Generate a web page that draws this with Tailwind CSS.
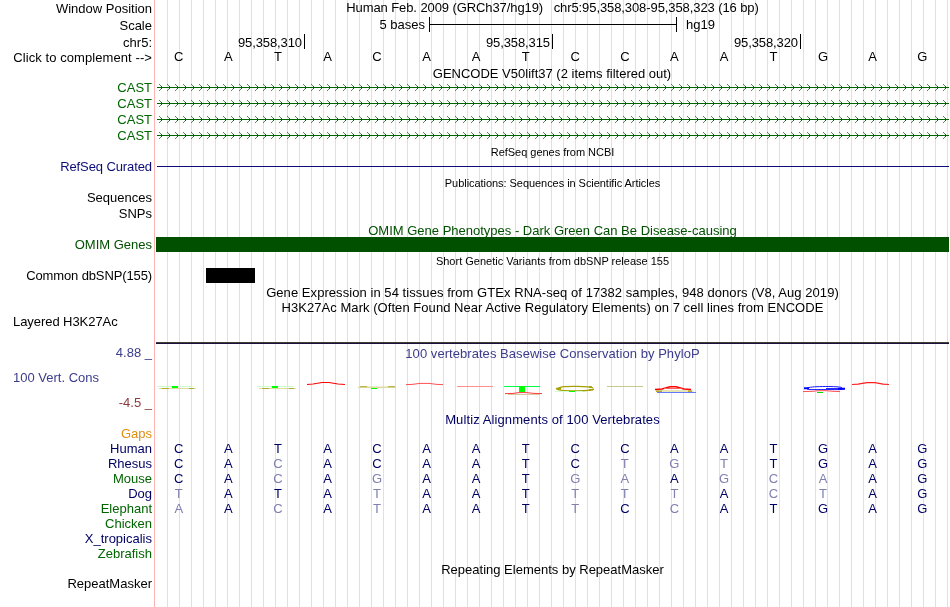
<!DOCTYPE html>
<html lang="en">
<head>
  <meta charset="UTF-8" />
  <meta name="viewport" content="width=device-width, initial-scale=1.0"/>
  <title>Genome Browser - hg19 chr5</title>
  <script src="https://cdn.jsdelivr.net/npm/@tailwindcss/browser@4"></script>
</head>
<body class="bg-white overflow-hidden">
  <div class="flex w-[950px] h-[607px] overflow-hidden will-change-transform antialiased text-[13px] leading-[15px] whitespace-pre text-black font-['Liberation_Sans',Arial,sans-serif]">

    <!-- track labels -->
    <div class="flex flex-col w-[154px] shrink-0 pr-[2px] text-right">
      <div class="mt-px">Window Position</div>
      <div class="mt-[2px]">Scale</div>
      <div class="mt-[2px]">chr5:</div>
      <div class="tracking-[0.08px]">Click to complement --&gt;</div>
      <div class="mt-[15px] text-[#006400]">CAST</div>
      <div class="mt-px text-[#006400]">CAST</div>
      <div class="mt-px text-[#006400]">CAST</div>
      <div class="mt-px text-[#006400]">CAST</div>
      <div class="mt-4 text-[#0c0c78] tracking-[-0.1px]">RefSeq Curated</div>
      <div class="mt-4">Sequences</div>
      <div class="mt-px">SNPs</div>
      <div class="mt-4 text-[#005000]">OMIM Genes</div>
      <div class="mt-4 tracking-[-0.12px]">Common dbSNP(155)</div>
      <div class="mt-[31px] pl-[13px] text-left tracking-[-0.06px]">Layered H3K27Ac</div>
      <div class="mt-4 text-[#3c3c8c]">4.88 _</div>
      <div class="mt-[10px] pl-[13px] text-left text-[#3c3c8c]">100 Vert. Cons</div>
      <div class="mt-[10px] text-[#8c3c3c]">-4.5 _</div>
      <div class="mt-4 text-[#e08c14]">Gaps</div>
      <div class="text-[#000064]">Human</div>
      <div class="text-[#000064]">Rhesus</div>
      <div class="text-[#006400]">Mouse</div>
      <div class="text-[#000064]">Dog</div>
      <div class="text-[#006400]">Elephant</div>
      <div class="text-[#006400]">Chicken</div>
      <div class="text-[#000064]">X_tropicalis</div>
      <div class="text-[#006400]">Zebrafish</div>
      <div class="mt-[15px]">RepeatMasker</div>
    </div>

    <!-- tracks, with a guideline every 12px -->
    <div class="flex flex-col w-[796px] shrink-0 pl-px text-center bg-[repeating-linear-gradient(to_right,transparent_0,transparent_11px,#dcdcff_11px,#dcdcff_12px)] bg-[position:2px_0] shadow-[inset_1px_0_0_#ffb4b4]">
      <div class="h-[15px] tracking-[-0.09px]">Human Feb. 2009 (GRCh37/hg19)   chr5:95,358,308-95,358,323 (16 bp)</div>

      <div class="flex mt-[2px] h-[15px]">
        <div class="w-[270px] text-right">5 bases</div>
        <div class="flex items-center w-[248px] ml-1 border-x border-black"><div class="w-full h-px bg-black"></div></div>
        <div class="ml-[9px]">hg19</div>
      </div>

      <div class="flex mt-[2px] h-[15px] text-right tracking-[-0.1px]">
        <div class="w-[150px] pr-[2px] border-r border-black leading-[17px]">95,358,310</div>
        <div class="w-[248px] pr-[2px] border-r border-black leading-[17px]">95,358,315</div>
        <div class="w-[248px] pr-[2px] border-r border-black leading-[17px]">95,358,320</div>
      </div>

      <div id="bases" class="grid grid-cols-16 -ml-px w-[793px] h-[15px]"></div>
      <div class="mt-[2px] -ml-px h-[15px]">GENCODE V50lift37 (2 items filtered out)</div>

      <svg class="block ml-[2px] w-[792px] h-16 shrink-0" shape-rendering="crispEdges">
        <defs>
          <pattern id="exon" width="8" height="16" patternUnits="userSpaceOnUse">
            <path d="M0 6h8v1h-8z M4 5h1v3h-1z" fill="#006400"/>
            <path d="M3 4h1v1h-1z M3 8h1v1h-1z M2 3h1v1h-1z M2 9h1v1h-1z" fill="#006400" fill-opacity=".7"/>
          </pattern>
        </defs>
        <rect width="792" height="64" fill="url(#exon)"/>
      </svg>

      <div class="h-[15px] text-[11px] tracking-[-0.03px]">RefSeq genes from NCBI</div>
      <div class="mt-[6px] ml-[2px] w-[792px] h-px bg-[#0c0c78]"></div>
      <div class="mt-[9px] h-[15px] text-[11px] tracking-[-0.05px]">Publications: Sequences in Scientific Articles</div>
      <div class="mt-8 h-[15px] text-[#005000]">OMIM Gene Phenotypes - Dark Green Can Be Disease-causing</div>
      <div class="-mt-px ml-px w-[793px] h-[15px] bg-[#005000]"></div>
      <div class="mt-[2px] h-[15px] text-[11px]">Short Genetic Variants from dbSNP release 155</div>
      <div class="-mt-px ml-[51px] w-[49px] h-[15px] bg-black"></div>
      <div class="mt-[2px] h-[15px] tracking-[0.06px]">Gene Expression in 54 tissues from GTEx RNA-seq of 17382 samples, 948 donors (V8, Aug 2019)</div>
      <div class="h-[15px] tracking-[0.05px]">H3K27Ac Mark (Often Found Near Active Regulatory Elements) on 7 cell lines from ENCODE</div>
      <div class="mt-[27px] ml-px w-[793px] h-[2px] border-t border-[#4a3a32] bg-[#14143c]"></div>
      <div class="mt-[2px] h-[15px] text-[#3c3c8c] tracking-[0.05px]">100 vertebrates Basewise Conservation by PhyloP</div>

      <!-- conservation logo -->
      <svg class="block w-[795px] h-[51px] shrink-0" viewBox="155 361 795 51" fill="none">
        <g id="lowT">
          <path d="M157 386.5h36" stroke="#c8ffc8"/>
          <path d="M172 387h6" stroke="#00ff00" stroke-width="2"/>
          <path d="M159 388.5h37" stroke="#dcdca0"/>
          <path d="M162 388.5h7m20 0h5" stroke="#b4aa32"/>
        </g>
        <use href="#lowT" x="100"/>
        <path d="M307 384.5l6-.5 9-1.5h7l9 1.5 7 .5" stroke="#ff0000" stroke-width="1.2"/>
        <path d="M358 387.2h38" stroke="#dcdca0" stroke-width="1.5"/>
        <path d="M360 386.7h7m21 0h7" stroke="#b4aa32"/>
        <path d="M371 388.5h6" stroke="#00ff00"/>
        <path d="M406 384.6l6-.2 8-1h9l8 1 6 .2" stroke="#ff5050"/>
        <path d="M457 386.5h36" stroke="#ff9090"/>
        <path d="M504 386.5h36" stroke="#00ff46"/>
        <path d="M519 386h6v6h-6z" fill="#00ff00"/>
        <path d="M508 394.5h32" stroke="#dcc8a0"/>
        <path d="M505 393.6l8-.2 6-.8h7l8 .8 8 .2" stroke="#ff3c3c"/>
        <path d="M593 388c-2-2-30-2.2-34-.3-4 1.6 0 2.6 5 2.8 9 .4 26 .4 30-1.4" stroke="#a5a000" stroke-width="1.2"/>
        <path d="M556 388.6h5m28-1.5h3m-3 2.6h4" stroke="#a5a000" stroke-width="1.6"/>
        <path d="M555 391.5h28" stroke="#d2ffd2"/>
        <path d="M569 391.5h6" stroke="#00ff00"/>
        <path d="M607 386.5h36" stroke="#c8c88c"/>
        <path d="M656 390h36l2 2h-38z" fill="#e6e6b4"/>
        <path d="M656 391.2h6m26 0h4" stroke="#b4aa32" stroke-width="1.5"/>
        <path d="M655 389.5l7-.6 8-2.1h6l8 2.1 7 .6" stroke="#ff0000" stroke-width="1.5"/>
        <path d="M664 388.5h18" stroke="#ff6060"/>
        <path d="M657 392.5h39" stroke="#6478ff"/>
        <path d="M842 387.6c-3-1.5-30-1.5-34 .2-3 1.2 0 1.8 4 1.8h26c3 0 6-.4 6-1h-18" stroke="#1414ff"/>
        <path d="M804 388.3h5m29 .4h7" stroke="#0000ff" stroke-width="2"/>
        <path d="M803 391.6l10-.3 5-.6h8l7 .6 7 .3" stroke="#ff5050"/>
        <path d="M817 392.5h6" stroke="#00dc00"/>
        <path d="M852 384.5l6-.4 9-1.5h8l8 1.5 6 .4" stroke="#ff1e1e" stroke-width="1.1"/>
      </svg>

      <div class="h-[15px] text-[#000064] tracking-[0.1px]">Multiz Alignments of 100 Vertebrates</div>
      <div id="alignments" class="mt-[14px] -ml-px w-[793px] h-[75px] text-[#000064]"></div>
      <div class="mt-[46px] h-[15px]">Repeating Elements by RepeatMasker</div>
    </div>
  </div>

  <script>
    // lower case = differs from the human base
    const species = [
      'CATACAATCCAATGAG',
      'CAcACAATCtgtTGAG',
      'CAcAgAATgaAgcaAG',
      'tATAtAATtttActAG',
      'aAcAtAATtCcATGAG',
    ];

    function addBases(parent, seq) {
      for (const base of seq) {
        const cell = document.createElement('div');
        if (base !== base.toUpperCase()) cell.className = 'text-[#8080b1]';
        cell.textContent = base.toUpperCase();
        parent.appendChild(cell);
      }
    }

    addBases(document.getElementById('bases'), species[0]);

    species.forEach(seq => {
      const row = document.createElement('div');
      row.className = 'grid grid-cols-16 h-[15px]';
      addBases(row, seq);
      document.getElementById('alignments').appendChild(row);
    });
  </script>
</body>
</html>
